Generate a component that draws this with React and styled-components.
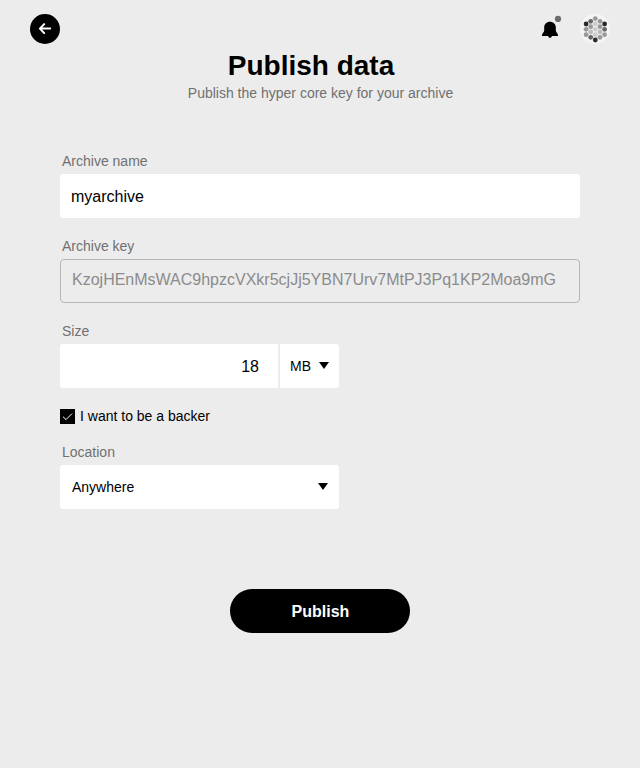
import React from "react";
import styled, { createGlobalStyle } from "styled-components";

const GlobalStyle = createGlobalStyle`
  *, *::before, *::after { box-sizing: border-box; }
  body {
    margin: 0;
    background: #ececec;
    font-family: "Liberation Sans", Arial, sans-serif;
    color: #000;
  }
`;

const Page = styled.div`
  min-height: 768px;
  display: flex;
  flex-direction: column;
`;

const TopBar = styled.header`
  display: flex;
  justify-content: space-between;
  height: 44px;
  padding: 14px 30px 0;
`;

const BackButton = styled.button`
  display: flex;
  width: 30px;
  height: 30px;
  padding: 0;
  border: 0;
  border-radius: 50%;
  background: #000;
`;

const Actions = styled.div`
  display: flex;
  gap: 18px;
`;

const BellIcon = styled.svg`
  width: 22px;
  height: 26px;
`;

const AvatarIcon = styled.svg`
  width: 30px;
  height: 30px;
`;

const Heading = styled.div`
  display: flex;
  flex-direction: column;
  align-items: center;
  height: 110px;
  padding-top: 6px;
`;

const Title = styled.h1`
  margin: 0;
  padding-right: 18px;
  font-size: 28px;
  line-height: 32px;
`;

const Subtitle = styled.p`
  margin: 3px 0 0;
  padding-left: 1px;
  font-size: 14px;
  line-height: 16px;
  color: #707070;
`;

const Form = styled.form`
  display: flex;
  flex-direction: column;
  width: 520px;
  margin: 0 auto;
`;

const Field = styled.div`
  display: flex;
  flex-direction: column;
  width: ${(p) => p.$width || "100%"};
  margin-bottom: ${(p) => p.$gap || "21px"};
`;

const Label = styled.label`
  height: 20px;
  padding: 0 2px;
  font-size: 14px;
  line-height: 14px;
  color: #707070;
`;

const Input = styled.input`
  width: 100%;
  height: 44px;
  margin: 0;
  padding: 1px 11px 0;
  border: 0;
  border-radius: 3px;
  outline: 0;
  background: #fff;
  color: #000;
  font: 16px "Liberation Sans", Arial, sans-serif;
`;

const SizeInput = styled(Input)`
  width: 218px;
  padding-right: 19px;
  border-radius: 3px 0 0 3px;
  text-align: right;
`;

const KeyBox = styled.div`
  height: 44px;
  padding: 0 11px;
  border: 1px solid #b5b5b5;
  border-radius: 4px;
  font-size: 16px;
  line-height: 39px;
  color: #8b8b8b;
  white-space: nowrap;
`;

const SizeRow = styled.div`
  display: flex;
  gap: 2px;
`;

const Select = styled.button`
  display: flex;
  flex: 1;
  align-items: center;
  justify-content: space-between;
  min-height: 44px;
  padding: ${(p) => p.$padding};
  border: 0;
  border-radius: ${(p) => p.$radius || "3px"};
  background: #fff;
  color: #000;
  font: 14px "Liberation Sans", Arial, sans-serif;
`;

const Arrow = styled.svg`
  width: 10px;
  height: 7px;
  margin-bottom: 1px;
`;

const CheckRow = styled.div`
  display: flex;
  align-items: center;
  gap: 5px;
  height: 15px;
  margin-bottom: 21px;
  font-size: 14px;
  line-height: 15px;
`;

const CheckBox = styled.span`
  display: flex;
  width: 15px;
  height: 15px;
  background: #000;
`;

const PublishButton = styled.button`
  align-self: center;
  width: 180px;
  height: 44px;
  padding: 1px 0 0 1px;
  border: 0;
  border-radius: 22px;
  background: #000;
  color: #fff;
  font: bold 16px "Liberation Sans", Arial, sans-serif;
`;

const avatarColumns = [
  { x: 6.1, y: 10, fills: ["#292929", "#999", "#999"] },
  { x: 10.7, y: 7.3, fills: ["#666", "#999", "#bcbcbc", "#666"] },
  { x: 15.3, y: 4.6, fills: ["#999", "#ccc", "#ccc", "#ccc", "#292929"] },
  { x: 20, y: 7.3, fills: ["#999", "#999", "#bcbcbc", "#999"] },
  { x: 24.6, y: 10, fills: ["#292929", "#666", "#999"] },
];

const Avatar = () => (
  <AvatarIcon viewBox="0 0 30 30">
    <circle cx="15" cy="15" r="15" fill="#f5f5f5" />
    {avatarColumns.map((col) =>
      col.fills.map((fill, i) => (
        <circle key={`${col.x}-${i}`} cx={col.x} cy={col.y + i * 5.35} r="2.4" fill={fill} />
      ))
    )}
  </AvatarIcon>
);

const Caret = () => (
  <Arrow viewBox="0 0 10 7">
    <path d="M0 0H10L5 7Z" fill="#000" />
  </Arrow>
);

export default function App() {
  return (
    <Page>
      <GlobalStyle />
      <TopBar>
        <BackButton aria-label="Back">
          <svg width="30" height="30" viewBox="0 0 30 30" fill="none" stroke="#fff" strokeWidth="2" strokeLinecap="round" strokeLinejoin="round">
            <path d="M20.2 14.6H10M14.2 10.1L9.9 14.6L14.2 19.1" />
          </svg>
        </BackButton>
        <Actions>
          <BellIcon viewBox="0 0 22 26">
            <path d="M10 7.7C6.4 7.7 4.2 10.4 4.2 13.4V16.2C4.2 18.4 2 19.3 2 21V22H8.1C8.3 23.2 9 23.8 10 23.8S11.7 23.2 11.9 22H18V21C18 19.3 15.8 18.4 15.8 16.2V13.4C15.8 10.4 13.6 7.7 10 7.7Z" fill="#000" />
            <circle cx="18" cy="4.9" r="3.1" fill="#6c6c6c" />
          </BellIcon>
          <Avatar />
        </Actions>
      </TopBar>
      <Heading>
        <Title>Publish data</Title>
        <Subtitle>Publish the hyper core key for your archive</Subtitle>
      </Heading>
      <Form onSubmit={(e) => e.preventDefault()}>
        <Field>
          <Label htmlFor="name">Archive name</Label>
          <Input id="name" defaultValue="myarchive" />
        </Field>
        <Field>
          <Label>Archive key</Label>
          <KeyBox>KzojHEnMsWAC9hpzcVXkr5cjJj5YBN7Urv7MtPJ3Pq1KP2Moa9mG</KeyBox>
        </Field>
        <Field $width="279px">
          <Label htmlFor="size">Size</Label>
          <SizeRow>
            <SizeInput id="size" defaultValue="18" />
            <Select type="button" $padding="0 10px" $radius="0 3px 3px 0">
              MB
              <Caret />
            </Select>
          </SizeRow>
        </Field>
        <CheckRow>
          <CheckBox role="checkbox" aria-checked="true">
            <svg width="15" height="15" viewBox="0 0 15 15" fill="none" stroke="#fff" strokeWidth="1">
              <path d="M3 7.7L6 10.6L12 4.6" />
            </svg>
          </CheckBox>
          I want to be a backer
        </CheckRow>
        <Field $width="279px" $gap="80px">
          <Label>Location</Label>
          <Select type="button" $padding="0 11px 0 12px">
            Anywhere
            <Caret />
          </Select>
        </Field>
        <PublishButton>Publish</PublishButton>
      </Form>
    </Page>
  );
}
